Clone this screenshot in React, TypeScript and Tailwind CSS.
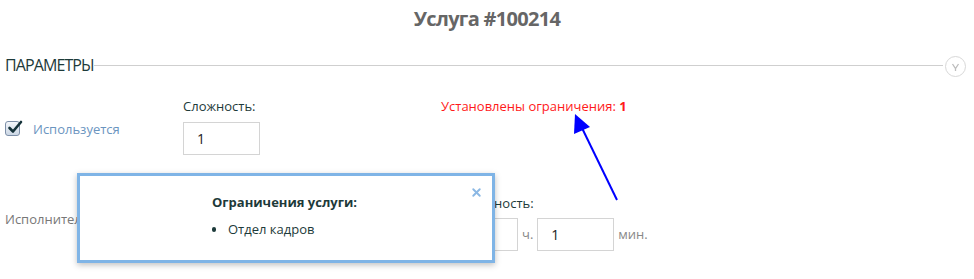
import { X } from 'lucide-react'

const font = { fontFamily: '"Open Sans", "Noto Sans", sans-serif' }

function Field({ value, w = 'w-[77px]' }: { value: string; w?: string }) {
  return (
    <div className={`${w} h-[33px] border border-[#d4d4d4] bg-white flex items-center px-[13px] text-[14px] text-[#222]`}>
      {value}
    </div>
  )
}

export default function App() {
  return (
    <div className="relative w-[974px] h-[279px] bg-white overflow-hidden" style={font}>
      <h1 className="pt-[6px] text-center text-[20px] font-bold text-[#666] tracking-[-0.7px] leading-[26px]">
        Услуга #100214
      </h1>

      <div className="mt-[21px] flex items-center pl-[5px] pr-[8px]">
        <span className="text-[16px] text-[#1d3a3a] tracking-[-0.9px] leading-[22px]">ПАРАМЕТРЫ</span>
        <div className="flex-1 h-px bg-[#cfcfcf]" />
        <div className="w-[21px] h-[21px] mt-[3px] rounded-full border border-[#d8d8d8] flex items-center justify-center ml-[2px]">
          <svg width="9" height="10" viewBox="0 0 9 10" fill="none" stroke="#bdbdbd" strokeWidth="1.3">
            <path d="M1.5 2 L4.5 6.5 L7.5 2 M4.5 6.5 V9" />
          </svg>
        </div>
      </div>

      <div className="mt-[20px] flex text-[13px]">
        <div className="w-[183px] pl-[5px] pt-[23px] flex items-start gap-[13px]">
          <span className="relative mt-[1px] w-[15px] h-[15px] rounded-[3px] border border-[#7d8fa8] bg-gradient-to-b from-[#f4f7fb] to-[#cbd6e4]">
            <svg className="absolute left-[1px] -top-[3px]" width="16" height="16" viewBox="0 0 16 16" fill="none" stroke="#15323a" strokeWidth="2.6" strokeLinecap="round" strokeLinejoin="round">
              <path d="M2.5 9 L6 12.5 L14 3" />
            </svg>
          </span>
          <span className="text-[#6b95bf] leading-[18px]">Используется</span>
        </div>
        <div className="w-[258px]">
          <div className="text-[#1d3a3a] leading-[18px] mb-[7px]">Сложность:</div>
          <Field value="1" />
        </div>
        <div className="text-[#ff1a1a] leading-[18px]">
          Установлены ограничения: <b>1</b>
        </div>
      </div>

      <div className="mt-[39px] flex text-[13px]">
        <div className="w-[441px] pl-[5px] pt-[16px] text-[#777]">Исполнитель</div>
        <div>
          <div className="text-[#1d3a3a] leading-[18px] mb-[6px]">Длительность:</div>
          <div className="flex items-center">
            <Field value="0" />
            <span className="ml-[4px] mr-[4px] text-[#888]">ч.</span>
            <Field value="1" />
            <span className="ml-[4px] text-[#888]">мин.</span>
          </div>
        </div>
      </div>

      <svg className="absolute left-0 top-0 pointer-events-none" width="974" height="279">
        <line x1="617" y1="200" x2="582" y2="128" stroke="#0000ff" strokeWidth="2" />
        <polygon points="575,114 574,134 590,127" fill="#0000ff" />
      </svg>

      <div className="absolute left-[77px] top-[173px] w-[418px] h-[90px] border-[3px] border-[#7fb4e6] bg-white shadow-[0_2px_6px_rgba(0,0,0,0.25)]">
        <X className="absolute right-[9px] top-[10px] text-[#8bb8e4]" size={13} strokeWidth={3.5} />
        <div className="pl-[132px] pt-[17px] text-[13px] text-[#1d3a3a]">
          <div className="font-bold leading-[18px]">Ограничения услуги:</div>
          <ul className="mt-[9px] flex items-center">
            <li className="flex items-center">
              <span className="w-[4px] h-[5px] rounded-full bg-[#1d3a3a] mr-[12px]" />
              Отдел кадров
            </li>
          </ul>
        </div>
      </div>
    </div>
  )
}
